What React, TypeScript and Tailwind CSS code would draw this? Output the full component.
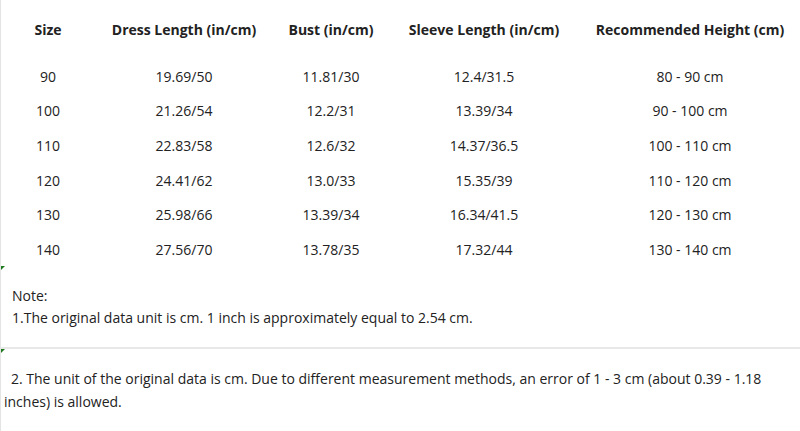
const rows = [
  ["90", "19.69/50", "11.81/30", "12.4/31.5", "80 - 90 cm"],
  ["100", "21.26/54", "12.2/31", "13.39/34", "90 - 100 cm"],
  ["110", "22.83/58", "12.6/32", "14.37/36.5", "100 - 110 cm"],
  ["120", "24.41/62", "13.0/33", "15.35/39", "110 - 120 cm"],
  ["130", "25.98/66", "13.39/34", "16.34/41.5", "120 - 130 cm"],
  ["140", "27.56/70", "13.78/35", "17.32/44", "130 - 140 cm"],
];

const headers = ["Size", "Dress Length (in/cm)", "Bust (in/cm)", "Sleeve Length (in/cm)", "Recommended Height (cm)"];

const gridCols = "grid grid-cols-[94px_178px_116px_190px_222px]";

const App = () => {
  return (
    <div className="w-[800px] h-[431px] bg-white text-[#222] text-[14px] font-['Open_Sans',sans-serif] border-l border-[#e4e4e4] overflow-hidden relative">
      <div className={`${gridCols} h-[34px] mt-[12px] items-center text-center font-bold`}>
        {headers.map((h) => (
          <div key={h}>{h}</div>
        ))}
      </div>

      <div className="mt-[13px]">
        {rows.map((r) => (
          <div key={r[0]} className={`${gridCols} h-[34.6px] items-center text-center`}>
            {r.map((c, i) => (
              <div key={i}>{c}</div>
            ))}
          </div>
        ))}
      </div>

      <div className="pl-[11px] pt-[18px] leading-[22px]">
        <div>Note:</div>
        <div>1.The original data unit is cm. 1 inch is approximately equal to 2.54 cm.</div>
      </div>

      <div className="mt-[18px] h-[2px] bg-[#e8e8e8]" />

      <div className="pt-[18px] leading-[23px]">
        <div className="pl-[10px]">2. The unit of the original data is cm. Due to different measurement methods, an error of 1 - 3 cm (about 0.39 - 1.18</div>
        <div className="pl-[3px]">inches) is allowed.</div>
      </div>

      {/* little green corner marks on the left edge */}
      <div className="absolute left-0 top-[266px] w-0 h-0 border-t-[4px] border-t-[#1f7a1f] border-r-[4px] border-r-transparent" />
      <div className="absolute left-0 top-[349px] w-0 h-0 border-t-[4px] border-t-[#1f7a1f] border-r-[4px] border-r-transparent" />
    </div>
  );
};

export default App;
